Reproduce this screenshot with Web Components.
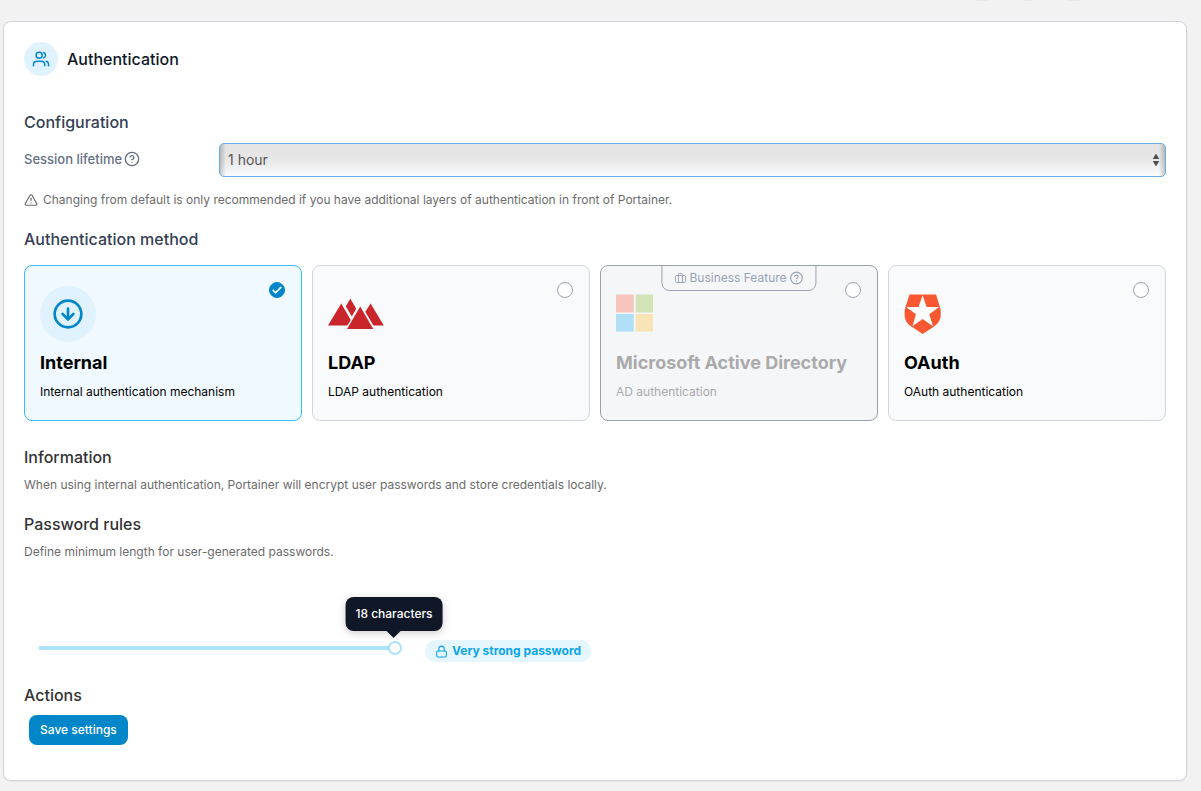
<!DOCTYPE html>
<html lang="en">
<head>
<meta charset="utf-8">
<meta name="viewport" content="width=device-width, initial-scale=1">
<title>Authentication</title>
<style>
  body { margin: 0; background: #f2f2f2; font-family: Inter, "Liberation Sans", sans-serif; font-size: 12px; line-height: 20px; color: #333; }
</style>
</head>
<body>
<auth-settings-page></auth-settings-page>
<script>
const icons = {
  users: '<path d="M22 21v-2c0-1.864-1.275-3.43-3-3.874M15.5 3.291a4.001 4.001 0 0 1 0 7.418M17 21c0-1.864 0-2.796-.305-3.53a4 4 0 0 0-2.164-2.165C13.796 15 12.864 15 11 15H8c-1.864 0-2.796 0-3.53.305a4 4 0 0 0-2.166 2.164C2 18.204 2 19.136 2 21"/><circle cx="9.5" cy="7" r="4"/>',
  help: '<circle cx="12" cy="12" r="10"/><path d="M9.09 9a3 3 0 0 1 5.83 1c0 2-3 3-3 3"/><path d="M12 17h.01"/>',
  warning: '<path d="m21.73 18-8-14a2 2 0 0 0-3.48 0l-8 14A2 2 0 0 0 4 21h16a2 2 0 0 0 1.73-3Z"/><path d="M12 9v4"/><path d="M12 17h.01"/>',
  download: '<circle cx="12" cy="12" r="10"/><path d="M12 8v8"/><path d="m8 12 4 4 4-4"/>',
  briefcase: '<rect x="2" y="7" width="20" height="14" rx="2"/><path d="M16 21V5a2 2 0 0 0-2-2h-4a2 2 0 0 0-2 2v16"/>',
  lock: '<rect x="3" y="11" width="18" height="11" rx="2"/><path d="M7 11V7a5 5 0 0 1 10 0v4"/>'
};

class BaseElement extends HTMLElement {
  constructor() {
    super();
    this.attachShadow({ mode: 'open' });
  }
  connectedCallback() {
    this.shadowRoot.innerHTML = `<style>*{box-sizing:border-box}${this.styles()}</style>${this.markup()}`;
  }
}

/* Line icon: <line-icon name="help" size="16"> */
class LineIcon extends BaseElement {
  styles() {
    return `:host{display:inline-flex;flex:none} svg{display:block;fill:none;stroke:currentColor;stroke-width:2;stroke-linecap:round;stroke-linejoin:round}`;
  }
  markup() {
    const size = this.getAttribute('size') || 16;
    return `<svg width="${size}" height="${size}" viewBox="0 0 24 24" aria-hidden="true">${icons[this.getAttribute('name')]}</svg>`;
  }
}
customElements.define('line-icon', LineIcon);

class BrandLogo extends BaseElement {
  styles() {
    return `:host{display:block} svg{display:block}
      .disc{display:flex;align-items:center;justify-content:center;width:56px;height:56px;border-radius:50%;background:#e0f2fe;color:#0086c9}`;
  }
  markup() {
    return {
      internal: `<div class="disc"><line-icon name="download" size="32"></line-icon></div>`,
      ldap: `<svg width="56" height="56" viewBox="0 -2 56 56" fill="#ca252b" aria-hidden="true">
        <path d="M13.2 15.4 22.8 32 19.3 37.6H0Z"/><path d="M22.4 10.8 28.2 20.7 23.8 28.6 17.8 18.2Z"/>
        <path d="M32.2 18.6 45.3 41H19Z"/><path d="M42.6 15.4 55.8 37.6H45.4L37.3 23.8Z"/></svg>`,
      microsoft: `<svg width="38" height="56" viewBox="0 0 38 56" aria-hidden="true">
        <path fill="#f5c4bb" d="M0 8.5h17.7v18H0z"/><path fill="#d3e4b7" d="M19.7 8.5H37v18H19.7z"/>
        <path fill="#b1dff6" d="M0 28h17.7v17.6H0z"/><path fill="#f9e4b7" d="M19.7 28H37v17.6H19.7z"/></svg>`,
      oauth: `<svg width="38" height="56" viewBox="0 0 38 56" aria-hidden="true">
        <path fill="#f75831" d="M5.5 8.5H32L36.4 22.5C38 33 35 37.5 28.5 41.5L18.6 48 9 41.5C2 37.5-.5 33 1 22.5Z"/>
        <path fill="#fff" d="M18.6 9.3 22.7 21H35.1L25.3 28.3 29 40.2 18.6 33 8.4 40.2 12 28.3 2.2 21H14.6Z"/></svg>`
    }[this.getAttribute('name')];
  }
}
customElements.define('brand-logo', BrandLogo);

/* A titled block of the form. */
class FormSection extends BaseElement {
  styles() {
    return `:host{display:block} h2{margin:0;font-size:16px;line-height:24px;font-weight:500;color:var(--heading,#333)}`;
  }
  markup() { return `<h2>${this.getAttribute('heading')}</h2><slot></slot>`; }
}
customElements.define('form-section', FormSection);

class SessionLifetime extends BaseElement {
  styles() {
    return `:host{display:grid;grid-template-columns:195px 1fr;margin-top:9px}
      label{display:flex;align-items:center;gap:2px;height:32px;font-size:13px;font-weight:500;color:#667085}
      .field{position:relative}
      select{display:block;appearance:none;width:100%;height:34px;padding:0 24px 0 8px;border:1px solid #66afe9;border-radius:5px;
        font:14px/20px Inter,"Liberation Sans",sans-serif;color:#555;outline:none;
        background:linear-gradient(90deg,#0003,#0000 6px,#0000 calc(100% - 6px),#0003),linear-gradient(#e4e4e4 0,#e6e6e6 45%,#fafbfd 100%)}
      svg{position:absolute;right:6px;top:10px;pointer-events:none}`;
  }
  markup() {
    return `<label for="lifetime">Session lifetime <line-icon name="help" size="16"></line-icon></label>
      <div class="field"><select id="lifetime"><option>1 hour</option><option>4 hours</option><option>8 hours</option><option>24 hours</option></select>
      <svg width="8" height="14" viewBox="0 0 8 14" fill="#4d4d4d" aria-hidden="true"><path d="M4 .5 7.2 6H.8ZM4 13.5.8 8H7.2Z"/></svg></div>`;
  }
}
customElements.define('session-lifetime', SessionLifetime);

/* Option card; the radio and its label are slotted so that all radios share one group. */
class MethodCard extends BaseElement {
  styles() {
    return `:host{display:block;position:relative;height:156px;padding:20px 15px;border:1px solid #d0d5dd;border-radius:8px;background:#f9fafb}
      :host([selected]){border-color:#36bffa;background:#f0f9ff}
      :host([limited]){border-color:#98a2b3;background:#f5f6f8}
      .top{display:flex;justify-content:space-between;align-items:flex-start;height:56px}
      .limit{position:absolute;top:-1px;left:50%;transform:translateX(-50%);display:flex;align-items:center;gap:3px;height:26px;padding:0 12px;white-space:nowrap;
        border:1px solid #98a2b3;border-radius:0 0 8px 8px;color:#98a2b3}
      .title{margin-top:9px;font-size:18px;line-height:24px;font-weight:700;color:#000}
      .text{margin-top:7px;color:#000}
      :host([limited]) .title,:host([limited]) .text{color:#aaa}
      ::slotted(input){appearance:none;flex:none;width:16px;height:16px;margin:-4px 0 0;border:1px solid #98a2b3;border-radius:50%;background:#fff}
      ::slotted(input:checked){border-color:#0086c9;background:#0086c9}
      .pick{position:relative;display:flex;margin-right:1px}
      .tick{display:none;position:absolute;left:0;top:-4px;pointer-events:none}
      :host([selected]) .tick{display:block}`;
  }
  markup() {
    const badge = this.hasAttribute('limited') ? `<div class="limit"><line-icon name="briefcase" size="12"></line-icon><span>Business Feature</span><line-icon name="help" size="14"></line-icon></div>` : '';
    return `${badge}<div class="top"><brand-logo name="${this.getAttribute('logo')}"></brand-logo><div class="pick"><slot name="radio"></slot>
      <svg class="tick" width="16" height="16" viewBox="0 0 16 16" fill="none" stroke="#fff" stroke-width="1.6" stroke-linecap="round" stroke-linejoin="round" aria-hidden="true"><path d="m4.2 8.4 2.4 2.4 5.2-5.4"/></svg></div></div>
      <div class="title"><slot name="title"></slot></div><div class="text"><slot></slot></div>`;
  }
}
customElements.define('method-card', MethodCard);

class AuthMethods extends BaseElement {
  styles() { return `:host{display:grid;grid-template-columns:repeat(4,1fr);gap:10px;margin-top:14px}`; }
  markup() {
    return [
      ['internal', 'Internal', 'Internal authentication mechanism', 'selected', 'checked'],
      ['ldap', 'LDAP', 'LDAP authentication', '', ''],
      ['microsoft', 'Microsoft Active Directory', 'AD authentication', 'limited', 'disabled'],
      ['oauth', 'OAuth', 'OAuth authentication', '', '']
    ].map(([id, title, text, state, input]) => `<method-card logo="${id}" ${state}>
      <input slot="radio" type="radio" name="method" id="${id}" ${input}><label slot="title" for="${id}">${title}</label>${text}</method-card>`).join('');
  }
  connectedCallback() {
    super.connectedCallback();
    this.shadowRoot.addEventListener('change', () => {
      for (const card of this.shadowRoot.querySelectorAll('method-card')) card.toggleAttribute('selected', card.querySelector('input').checked);
    });
  }
}
customElements.define('auth-methods', AuthMethods);

class PasswordLength extends BaseElement {
  styles() {
    return `:host{display:flex;align-items:center;gap:23px;height:24px;margin:77px 0 20px 8px}
      .slider{position:relative;display:flex;width:370px;height:14px;margin-top:-6px}
      input{appearance:none;width:100%;height:14px;margin:0;outline:none;background:linear-gradient(#abe2fb,#abe2fb) center/calc(100% - 14px) 4px no-repeat}
      input::-webkit-slider-thumb{appearance:none;width:14px;height:14px;border:2px solid #abe2fb;border-radius:50%;background:#fff}
      output{position:absolute;right:8px;bottom:24px;transform:translateX(50%);padding:7px 10px;border-radius:8px;background:#101828;color:#fff;font-weight:500;white-space:nowrap;box-shadow:0 2px 8px #0003}
      output::after{content:"";position:absolute;left:50%;top:100%;margin-left:-7px;border:7px solid transparent;border-top-color:#101828;border-bottom:0}
      .badge{display:flex;align-items:center;gap:4px;height:22px;padding:0 10px;border-radius:11px;background:#e6f6fe;color:#0ba5ec;font-weight:700;white-space:nowrap}`;
  }
  markup() {
    return `<div class="slider"><input id="length" type="range" min="1" max="18" value="18" aria-label="Minimum password length"><output for="length">18 characters</output></div>
      <div class="badge"><line-icon name="lock" size="13"></line-icon><span>Very strong password</span></div>`;
  }
}
customElements.define('password-length', PasswordLength);

class WidgetPanel extends BaseElement {
  styles() {
    return `:host{display:block;padding:20px 20px 35px;border:1px solid #d0d5dd;border-radius:8px;background:#fff;box-shadow:0 1px 2px #1018280d}
      header{display:flex;align-items:center;gap:9px;margin-bottom:34px}
      .badge{display:flex;align-items:center;justify-content:center;width:34px;height:34px;border-radius:50%;background:#e0f2fe;color:#0086c9}
      h1{margin:0;font-size:16px;line-height:24px;font-weight:500;color:#101828}`;
  }
  markup() {
    return `<header><span class="badge"><line-icon name="users" size="18"></line-icon></span><h1>${this.getAttribute('heading')}</h1></header><slot></slot>`;
  }
}
customElements.define('widget-panel', WidgetPanel);

class AuthSettingsPage extends BaseElement {
  styles() {
    return `:host{display:block;padding:0 14px 10px 3px}
      .strip{display:flex;justify-content:flex-end;gap:36px;height:21px;padding-right:108px}
      .strip i{width:10px;height:1px;background:#e6e6ef}
      .slate{--heading:#344054}
      form-section + form-section{margin-top:17px}
      form-section.methods + form-section{margin-top:24px}
      .note{display:flex;align-items:center;gap:5px;margin:13px 0 0}
      p{margin:6px 0 0;color:#6b6b6b}
      button{display:block;height:30px;margin:8px 0 0 5px;padding:0 11px;border:0;border-radius:8px;background:#0086c9;color:#fff;font:500 12px/20px Inter,"Liberation Sans",sans-serif}`;
  }
  markup() {
    return `<div class="strip"><i></i><i></i><i></i></div>
      <widget-panel heading="Authentication">
        <form-section class="slate" heading="Configuration">
          <session-lifetime></session-lifetime>
          <p class="note"><line-icon name="warning" size="14"></line-icon>Changing from default is only recommended if you have additional layers of authentication in front of Portainer.</p>
        </form-section>
        <form-section class="slate methods" heading="Authentication method"><auth-methods></auth-methods></form-section>
        <form-section heading="Information"><p>When using internal authentication, Portainer will encrypt user passwords and store credentials locally.</p></form-section>
        <form-section heading="Password rules"><p>Define minimum length for user-generated passwords.</p><password-length></password-length></form-section>
        <form-section class="actions" heading="Actions"><button type="button">Save settings</button></form-section>
      </widget-panel>`;
  }
}
customElements.define('auth-settings-page', AuthSettingsPage);
</script>
</body>
</html>
